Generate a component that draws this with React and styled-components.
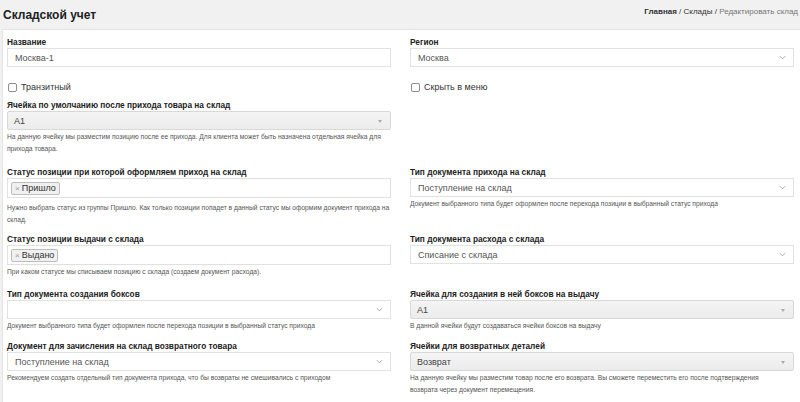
import React from "react";
import styled, { createGlobalStyle } from "styled-components";

const GlobalStyle = createGlobalStyle`
  body {
    margin: 0;
    background: #f1f1f1;
    font-family: "Liberation Sans", Arial, sans-serif;
    color: #333;
  }
`;

const Page = styled.div`
  width: 800px;
  height: 402px;
  overflow: hidden;
  background: #f1f1f1;
`;

const TopBar = styled.div`
  height: 29px;
  display: flex;
  align-items: center;
  justify-content: space-between;
  padding: 0 2px 0 3px;
`;

const Title = styled.h1`
  margin: 0;
  font-size: 12px;
  font-weight: bold;
  color: #222;
`;

const Crumbs = styled.div`
  font-size: 8px;
  color: #333;
  align-self: flex-start;
  margin-top: 7px;
  b {
    font-weight: bold;
  }
  span {
    color: #777;
  }
`;

const Panel = styled.div`
  margin-left: 2px;
  background: #fff;
  border-top: 1px solid #e4e4e4;
  border-left: 1px solid #e4e4e4;
  padding: 6px 6px 20px 4px;
  min-height: 360px;
`;

const Row = styled.div`
  display: grid;
  grid-template-columns: 384px 384px;
  column-gap: 19px;
  margin-bottom: ${p => p.gap ?? 10}px;
`;

const Field = styled.div`
  display: flex;
  flex-direction: column;
`;

const Label = styled.label`
  font-size: 8.3px;
  font-weight: bold;
  line-height: 12px;
  color: #222;
`;

const TextBox = styled.div`
  height: 19px;
  box-sizing: border-box;
  border: 1px solid #e2e2e2;
  background: #fff;
  display: flex;
  align-items: center;
  padding: 0 7px;
  font-size: 9px;
  color: #555;
  position: relative;
`;

const Chevron = styled.span`
  position: absolute;
  right: 7px;
  top: 5px;
  width: 7px;
  height: 7px;
  display: flex;
`;

const Select2 = styled.div`
  height: 19px;
  box-sizing: border-box;
  border: 1px solid #d8d8d8;
  border-radius: 2px;
  background: linear-gradient(#f4f4f4, #ececec);
  display: flex;
  align-items: center;
  padding: 0 6px;
  font-size: 9px;
  color: #444;
  position: relative;
  &::after {
    content: "";
    position: absolute;
    right: 8px;
    top: 8px;
    border-left: 2px solid transparent;
    border-right: 2px solid transparent;
    border-top: 3px solid #aaa;
  }
`;

const TagBox = styled.div`
  height: 20px;
  box-sizing: border-box;
  border: 1px solid #e0e0e0;
  background: #fff;
  display: flex;
  align-items: center;
  padding: 0 3px;
`;

const Tag = styled.span`
  height: 13px;
  box-sizing: border-box;
  border: 1px solid #bdbdbd;
  border-radius: 2px;
  background: #f0f0f0;
  font-size: 9px;
  color: #333;
  display: inline-flex;
  align-items: center;
  padding: 0 3px;
  i {
    font-style: normal;
    color: #999;
    font-size: 8px;
    margin-right: 2px;
  }
`;

const Help = styled.p`
  margin: ${p => p.top ?? 1}px 0 0;
  font-size: 6.7px;
  line-height: 12px;
  color: #555;
`;

const Check = styled.label`
  display: flex;
  align-items: center;
  gap: 4px;
  font-size: 9px;
  color: #333;
  height: 12px;
  span.box {
    width: 7px;
    height: 7px;
    border: 1px solid #8c8c8c;
    border-radius: 2px;
    background: #fff;
    margin-left: 1px;
  }
`;

const Arrow = () => (
  <Chevron>
    <svg width="7" height="7" viewBox="0 0 8 8">
      <path d="M1 2.5 L4 5.5 L7 2.5" fill="none" stroke="#9a9a9a" strokeWidth="1" />
    </svg>
  </Chevron>
);

const Input = ({ children, arrow }) => (
  <TextBox>
    {children}
    {arrow && <Arrow />}
  </TextBox>
);

export default function App() {
  return (
    <Page>
      <GlobalStyle />
      <TopBar>
        <Title>Складской учет</Title>
        <Crumbs>
          <b>Главная</b> / Склады / <span>Редактировать склад</span>
        </Crumbs>
      </TopBar>
      <Panel>
        <Row gap={14}>
          <Field>
            <Label>Название</Label>
            <Input>Москва-1</Input>
          </Field>
          <Field>
            <Label>Регион</Label>
            <Input arrow>Москва</Input>
          </Field>
        </Row>
        <Row gap={6}>
          <Check><span className="box" />Транзитный</Check>
          <Check><span className="box" />Скрыть в меню</Check>
        </Row>
        <Row gap={11}>
          <Field>
            <Label>Ячейка по умолчанию после прихода товара на склад</Label>
            <Select2>A1</Select2>
            <Help>
              На данную ячейку мы разместим позицию после ее прихода. Для клиента может быть назначена отдельная ячейка для
              прихода товара.
            </Help>
          </Field>
        </Row>
        <Row gap={7}>
          <Field>
            <Label>Статус позиции при которой оформляем приход на склад</Label>
            <TagBox><Tag><i>×</i>Пришло</Tag></TagBox>
            <Help top={4}>
              Нужно выбрать статус из группы Пришло. Как только позиции попадет в данный статус мы оформим документ прихода
              на склад.
            </Help>
          </Field>
          <Field>
            <Label>Тип документа прихода на склад</Label>
            <Input arrow>Поступление на склад</Input>
            <Help>Документ выбранного типа будет оформлен после перехода позиции в выбранный статус прихода</Help>
          </Field>
        </Row>
        <Row gap={10}>
          <Field>
            <Label>Статус позиции выдачи с склада</Label>
            <TagBox><Tag><i>×</i>Выдано</Tag></TagBox>
            <Help>При каком статусе мы списываем позицию с склада (создаем документ расхода).</Help>
          </Field>
          <Field>
            <Label>Тип документа расхода с склада</Label>
            <Input arrow>Списание с склада</Input>
          </Field>
        </Row>
        <Row gap={8}>
          <Field>
            <Label>Тип документа создания боксов</Label>
            <Input arrow />
            <Help>Документ выбранного типа будет оформлен после перехода позиции в выбранный статус прихода</Help>
          </Field>
          <Field>
            <Label>Ячейка для создания в ней боксов на выдачу</Label>
            <Select2>A1</Select2>
            <Help>В данной ячейки будут создаваться ячейки боксов на выдачу</Help>
          </Field>
        </Row>
        <Row gap={0}>
          <Field>
            <Label>Документ для зачисления на склад возвратного товара</Label>
            <Input arrow>Поступление на склад</Input>
            <Help>Рекомендуем создать отдельный тип документа прихода, что бы возвраты не смешивались с приходом</Help>
          </Field>
          <Field>
            <Label>Ячейки для возвратных деталей</Label>
            <Select2>Возврат</Select2>
            <Help>
              На данную ячейку мы разместим товар после его возврата. Вы сможете переместить его после подтверждения
              <br />
              возврата через документ перемещения.
            </Help>
          </Field>
        </Row>
      </Panel>
    </Page>
  );
}
